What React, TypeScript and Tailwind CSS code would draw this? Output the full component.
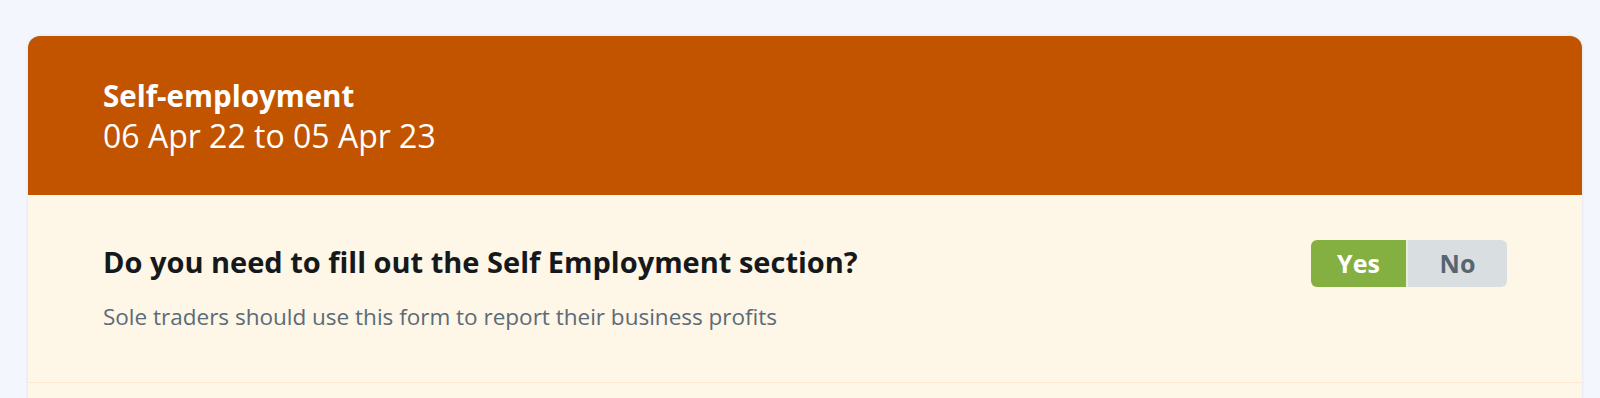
import React from 'react';

const App: React.FC = () => {
  return (
    <div
      className="min-h-screen bg-[#f3f7fd] px-[28px] pt-[36px] pr-[18px]"
      style={{ fontFamily: '"Open Sans", Lato, sans-serif' }}
    >
      <div className="rounded-t-[12px] overflow-hidden shadow-[0_0_3px_rgba(120,140,170,0.25)]">
        {/* Header */}
        <div className="bg-[#c25400] h-[159px] px-[75px] pt-[40px] text-white">
          <h1 className="text-[29.5px] font-bold leading-[40px]">Self-employment</h1>
          <p className="text-[32px] leading-[40px]">06 Apr 22 to 05 Apr 23</p>
        </div>

        {/* Question */}
        <div className="bg-[#fef6e6] border-b border-[#fbe8d3] h-[188px] px-[75px] pt-[47px] flex justify-between">
          <div>
            <h2 className="text-[29px] font-bold leading-[40px] text-[#15191c]">
              Do you need to fill out the Self Employment section?
            </h2>
            <p className="mt-[21px] text-[22.5px] leading-[28px] text-[#5b6b78]">
              Sole traders should use this form to report their business profits
            </p>
          </div>
          <div className="flex h-[47px] mt-[-2px] rounded-[6px] overflow-hidden">
            <button className="w-[97px] bg-[#84b041] text-white text-[25px] font-bold border-r-2 border-[#e8efd9]">
              Yes
            </button>
            <button className="w-[99px] bg-[#d9dee1] text-[#56656f] text-[25px] font-bold">
              No
            </button>
          </div>
        </div>
        <div className="bg-[#fef6e6] h-[40px]" />
      </div>
    </div>
  );
};

export default App;
